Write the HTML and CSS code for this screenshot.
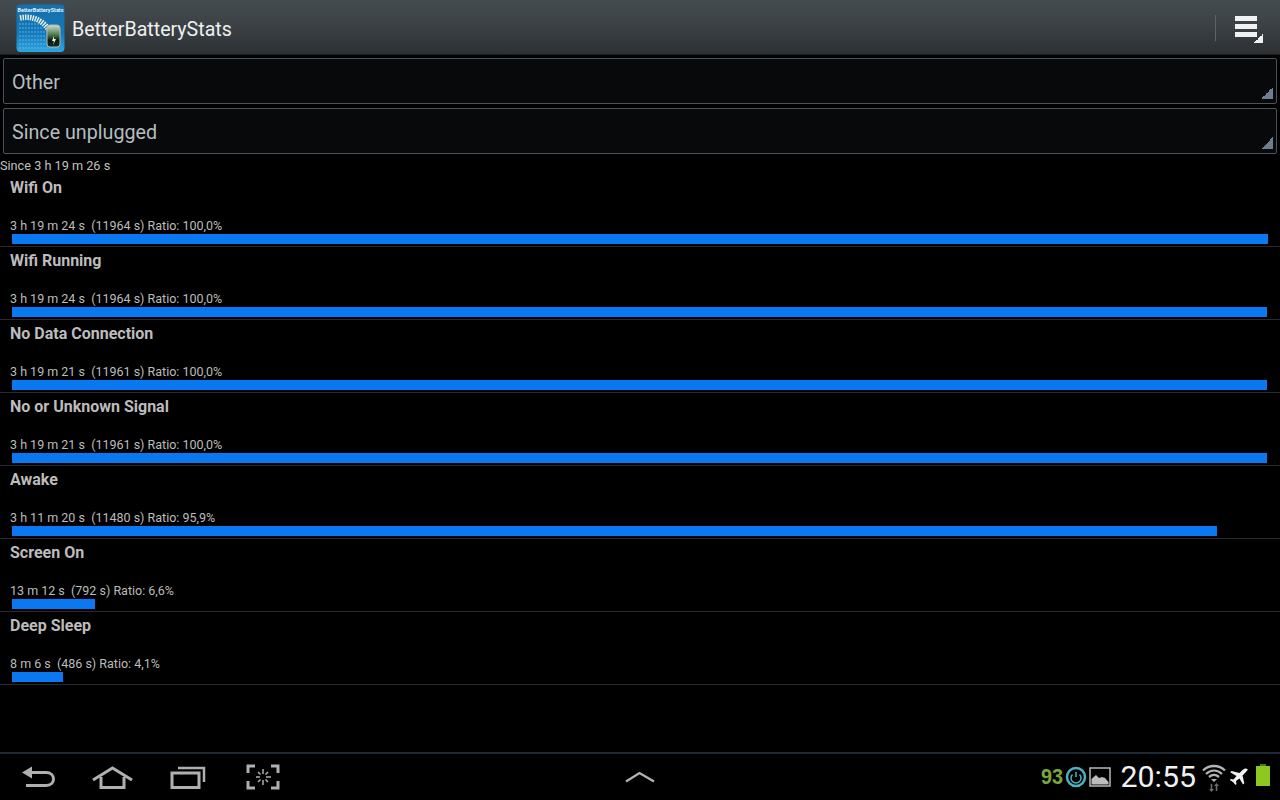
FILE: index.html
```html
<!DOCTYPE html>
<html lang="en">
<head>
<meta charset="utf-8">
<title>BetterBatteryStats</title>
<link rel="stylesheet" href="styles.css">
</head>
<body>
<div class="app">
  <header class="actionbar">
    <svg class="logo" width="50" height="50" viewBox="0 0 50 50">
      <defs>
        <linearGradient id="lg" x1="0" y1="0" x2="0" y2="1"><stop offset="0" stop-color="#1570ac"/><stop offset=".6" stop-color="#1478ba"/><stop offset="1" stop-color="#2ea6de"/></linearGradient>
        <linearGradient id="cell" x1="0" y1="0" x2="0" y2="1"><stop offset="0" stop-color="#cfdccf"/><stop offset=".45" stop-color="#4b7a46"/><stop offset=".7" stop-color="#0b1a10"/><stop offset="1" stop-color="#1a2a28"/></linearGradient>
      </defs>
      <rect x="0.500" y="1.500" width="48" height="47.500" rx="4" fill="url(#lg)"/>
      <path d="M3 21h22M3 25h24M3 29h26M3 33h27M3 37h27M3 41h28M3 45h40" stroke="#6cc0ea" stroke-width="1" stroke-dasharray="2 1" opacity=".75"/>
      <text class="logo-text" x="24.500" y="9">BetterBatteryStats</text>
      <path d="M4 15C14 13 25 15 33 27" stroke="#e6efe6" stroke-width="5.500" fill="none" stroke-dasharray="1.500 1"/>
      <rect x="31" y="22" width="13" height="22" rx="3" fill="url(#cell)" stroke="#a9bcb4"/>
      <path d="M38 33l-2 5h2l-1 4 3-6h-2z" fill="#f2f6f0"/>
    </svg>
    <span class="app-title">BetterBatteryStats</span>
    <span class="divider"></span>
    <span class="menu">
      <span class="menu-line"></span><span class="menu-line"></span><span class="menu-line"></span>
      <span class="menu-corner"></span>
    </span>
  </header>

  <div class="spinners">
    <div class="spinner">Other<span class="spin-arrow"></span></div>
    <div class="spinner">Since unplugged<span class="spin-arrow"></span></div>
  </div>

  <div class="since">Since 3 h 19 m 26 s</div>

  <main class="list">
    <div class="row"><div class="row-title">Wifi On</div><div class="row-sub">3 h 19 m 24 s&nbsp; (11964 s) Ratio: 100,0%</div><div class="bar" style="width:1256px"></div></div>
    <div class="row"><div class="row-title">Wifi Running</div><div class="row-sub">3 h 19 m 24 s&nbsp; (11964 s) Ratio: 100,0%</div><div class="bar" style="width:1255px"></div></div>
    <div class="row"><div class="row-title">No Data Connection</div><div class="row-sub">3 h 19 m 21 s&nbsp; (11961 s) Ratio: 100,0%</div><div class="bar" style="width:1255px"></div></div>
    <div class="row"><div class="row-title">No or Unknown Signal</div><div class="row-sub">3 h 19 m 21 s&nbsp; (11961 s) Ratio: 100,0%</div><div class="bar" style="width:1255px"></div></div>
    <div class="row"><div class="row-title">Awake</div><div class="row-sub">3 h 11 m 20 s&nbsp; (11480 s) Ratio: 95,9%</div><div class="bar" style="width:1205px"></div></div>
    <div class="row"><div class="row-title">Screen On</div><div class="row-sub">13 m 12 s&nbsp; (792 s) Ratio: 6,6%</div><div class="bar" style="width:83px"></div></div>
    <div class="row"><div class="row-title">Deep Sleep</div><div class="row-sub">8 m 6 s&nbsp; (486 s) Ratio: 4,1%</div><div class="bar" style="width:51px"></div></div>
  </main>

  <footer class="sysbar">
    <div class="nav-left">
      <svg class="nav-back" width="34" height="24" viewBox="0 0 34 24" fill="none" stroke="#b0b0b0" stroke-width="3">
        <path d="M4 7.500H25C35 7.500 35 20.500 25 20.500H5"/>
        <path d="M1 7.500L11 1.500V13.500Z" fill="#b0b0b0" stroke="none"/>
      </svg>
      <svg class="nav-home" width="42" height="24" viewBox="0 0 42 24" fill="none" stroke="#b0b0b0" stroke-width="3">
        <path d="M1 15L20.500 3L40 15"/>
        <path d="M9 12V22.500H32V12"/>
      </svg>
      <svg class="nav-recent" width="36" height="24" viewBox="0 0 36 24" fill="none" stroke="#b0b0b0" stroke-width="3">
        <rect x="2" y="8" width="27" height="14.500"/>
        <path d="M8 3H34V17" stroke-width="2.500"/>
      </svg>
      <svg class="nav-shot" width="34" height="26" viewBox="0 0 34 26" fill="none" stroke="#b0b0b0">
        <path d="M9 2H2V9M25 2H32V9M2 17V24H9M32 17V24H25" stroke-width="3"/>
        <path d="M17 5V10M17 16V21M10 13H14M20 13H25M12 8L14.500 10.500M22 8L19.500 10.500M12 18L14.500 15.500M22 18L19.500 15.500" stroke-width="1.500"/>
      </svg>
    </div>
    <svg class="nav-up" width="32" height="12" viewBox="0 0 32 12" fill="none" stroke="#b4b4b4" stroke-width="2.200"><path d="M2 10.500L15.500 2L30 10.500"/></svg>
    <div class="tray">
      <span class="batt-pct">93</span>
      <svg class="ic-power" width="22" height="22" viewBox="0 0 22 22" fill="none" stroke="#4fb0c0">
        <circle cx="11" cy="11" r="9" stroke-width="2.500"/>
        <path d="M7.500 8.500a5 5 0 1 0 7 0" stroke-width="1.500"/>
        <path d="M11 6v5" stroke-width="1.500"/>
      </svg>
      <svg class="ic-pic" width="22" height="20" viewBox="0 0 22 20">
        <rect x="1" y="1" width="20" height="18" fill="none" stroke="#b8b8b8" stroke-width="1.500"/>
        <path d="M2.500 17.500V12L7 8l3 3 3-1 3 1 3.500 4v2.500z" fill="#bdbdbd"/>
      </svg>
      <span class="clock">20:55</span>
      <svg class="ic-wifi" width="24" height="28" viewBox="0 0 24 28" fill="none" stroke="#b4b4b4" stroke-width="2.300">
        <path d="M1 6.500C7 .5 17 .5 23 6.500M4 10C9 5.500 15 5.500 20 10M7 13C10 10.500 14 10.500 17 13"/>
        <path d="M9 15L12 18L15 15Z" fill="#b4b4b4" stroke="none"/>
        <path d="M9.500 20V27M14.500 27V22" stroke="#6c6c6c" stroke-width="1.600"/>
        <path d="M7 25l2.500 3 2.500-3zM12 22l2.500-3 2.500 3z" fill="#6c6c6c" stroke="none"/>
      </svg>
      <svg class="ic-plane" width="19" height="18" viewBox="0 0 19 18">
        <path d="M18.500 1C17 -.2 15 .5 13.500 2L10.500 5 2.500 3 1.200 4.300 7.500 8 4.500 11.500 1.800 11 .8 12 4 14 6.500 17 7.500 16 7 13 10.500 10.500 14 16.500 15.300 15.200 13.500 7.500 16.500 4.500C18 3 19 2 18.500 1Z" fill="#f2f2f2"/>
      </svg>
      <svg class="ic-batt" width="14" height="22" viewBox="0 0 14 22">
        <rect x="4" y="0" width="6" height="2" fill="#4c7a1c"/>
        <rect x="0" y="2" width="14" height="20" fill="#8cc820"/>
      </svg>
    </div>
  </footer>
</div>
</body>
</html>
```

FILE: styles.css
```css
* { box-sizing: border-box; }
html, body { margin: 0; padding: 0; background: #000; }
body { font-family: Roboto, "Liberation Sans", sans-serif; color: #c4c4c4; }

.app { width: 1280px; height: 800px; display: flex; flex-direction: column; overflow: hidden; background: #000; }

.actionbar {
  height: 55px; flex: none; display: flex; align-items: center;
  padding: 0 16px; background: linear-gradient(#454c50, #3a4044 50%, #2c3033);
  border-bottom: 1px solid #1c1f21;
}
.logo { flex: none; width: 50px; height: 50px; margin: 2px -1px 0 0; }
.logo-text { font-family: Roboto, sans-serif; font-size: 5.500px; font-weight: 700; fill: #e6f2fa; text-anchor: middle; }
.app-title { margin: 5px 0 0 7px; font-size: 19.600px; color: #f0f0f0; }
.divider { margin: 2px 0 0 auto; width: 1px; height: 26px; background: #5c6468; }
.menu { position: relative; display: flex; flex-direction: column; gap: 3px; width: 28px; margin: -1px 1px 0 19px; }
.menu-line { display: block; width: 22px; height: 5px; background: #f0f2f2; }
.menu-corner {
  position: absolute; right: 0; bottom: -6px; width: 9px; height: 9px;
  background: linear-gradient(135deg, transparent 50%, #f0f2f2 50%);
}

.spinners { flex: none; display: flex; flex-direction: column; gap: 4px; padding: 3px 3px 0; }
.spinner {
  position: relative; height: 46px; padding: 2px 0 0 8px; display: flex; align-items: center;
  font-size: 19.700px; color: #b4bec0; background: #08090a;
  border: 1px solid #49535a; border-radius: 2px;
}
.spin-arrow {
  position: absolute; right: 3px; bottom: 4px; width: 12px; height: 12px;
  background: linear-gradient(135deg, transparent 50%, #6f7d90 50%);
}

.since { flex: none; height: 20px; padding-top: 4px; font-size: 12.700px; line-height: 16px; color: #c0c0c0; }

.list { flex: 1; }
.row { height: 73px; padding: 5px 12px 0 10px; border-bottom: 1px solid #2a2a30; }
.row-title { font-size: 16px; font-weight: 700; line-height: 17px; color: #bcbcbc; }
.row-sub { margin-top: 23px; font-size: 12.500px; line-height: 14px; color: #bcbcbc; white-space: pre; }
.bar { margin: 1px 0 0 2px; height: 10px; background: #0a78f0; }

.sysbar {
  height: 48px; flex: none; display: flex; align-items: center; position: relative;
  border-top: 2px solid #1d2a32; background: #000;
}
.nav-left { display: flex; align-items: center; padding-left: 21px; }
.nav-home { margin-left: 37px; }
.nav-recent { margin-left: 36px; }
.nav-shot { margin-left: 40px; }
.nav-up { position: absolute; left: 624px; top: 17px; }
.tray { margin-left: auto; display: flex; align-items: center; padding-right: 10px; }
.batt-pct { font-family: "Liberation Sans", sans-serif; font-size: 22px; font-weight: 700; color: #79a83c; transform: scaleX(.9); transform-origin: left; width: 24px; }
.ic-pic { margin-left: 2px; }
.clock { margin-left: 10px; font-size: 30.300px; color: #f0f0f0; line-height: 36px; }
.ic-wifi { margin-left: 6px; margin-top: 2px; }
.ic-plane { margin-left: 3px; }
.ic-batt { margin-left: 8px; margin-top: -4px; }
```
